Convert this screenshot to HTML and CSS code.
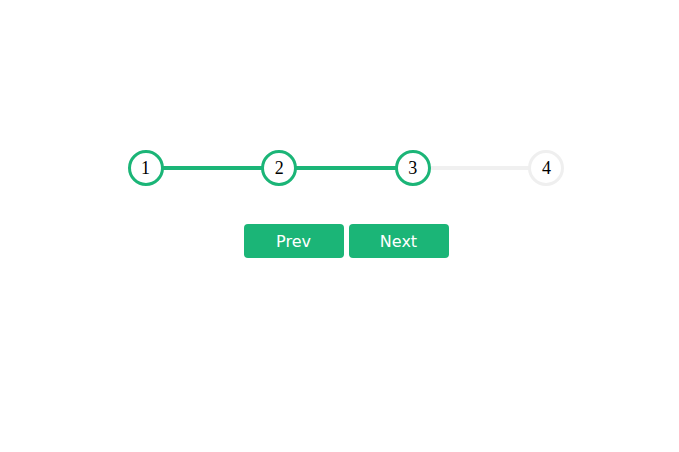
FILE: index.html
```html
<!DOCTYPE html>
<html>
<head>
<meta charset="utf-8">
<link rel="stylesheet" href="styles.css">
</head>
<body>
<div class="wrap">
  <div class="progress">
    <div class="line"><div class="fill" style="width: 66.67%"></div></div>
    <div class="circle active">1</div>
    <div class="circle active">2</div>
    <div class="circle active">3</div>
    <div class="circle">4</div>
  </div>
  <div class="buttons">
    <button class="btn">Prev</button>
    <button class="btn">Next</button>
  </div>
</div>
</body>
</html>
```
FILE: styles.css
```css
* { box-sizing: border-box; }
body {
  margin: 0;
  background: #fff;
}
.wrap {
  display: flex;
  flex-direction: column;
  align-items: center;
  padding-top: 150px;
  padding-left: 13px;
}
.progress {
  position: relative;
  width: 437px;
  display: flex;
  justify-content: space-between;
}
.line {
  position: absolute;
  left: 18px;
  right: 18px;
  top: 16px;
  height: 4px;
  background: #f0f0f0;
}
.fill {
  height: 100%;
  background: #1bb577;
}
.circle {
  position: relative;
  width: 36px;
  height: 36px;
  border-radius: 50%;
  border: 3px solid #efefef;
  background: #fff;
  display: flex;
  align-items: center;
  justify-content: center;
  font-family: "Liberation Serif", serif;
  font-size: 18px;
  color: #000;
}
.circle.active {
  border-color: #1bb577;
}
.buttons {
  display: flex;
  gap: 5px;
  margin-top: 38px;
}
.btn {
  width: 100px;
  height: 34px;
  border: 0;
  border-radius: 4px;
  background: #1bb577;
  color: #fff;
  font-family: "DejaVu Sans", sans-serif;
  font-size: 16px;
  padding: 0;
}
```
